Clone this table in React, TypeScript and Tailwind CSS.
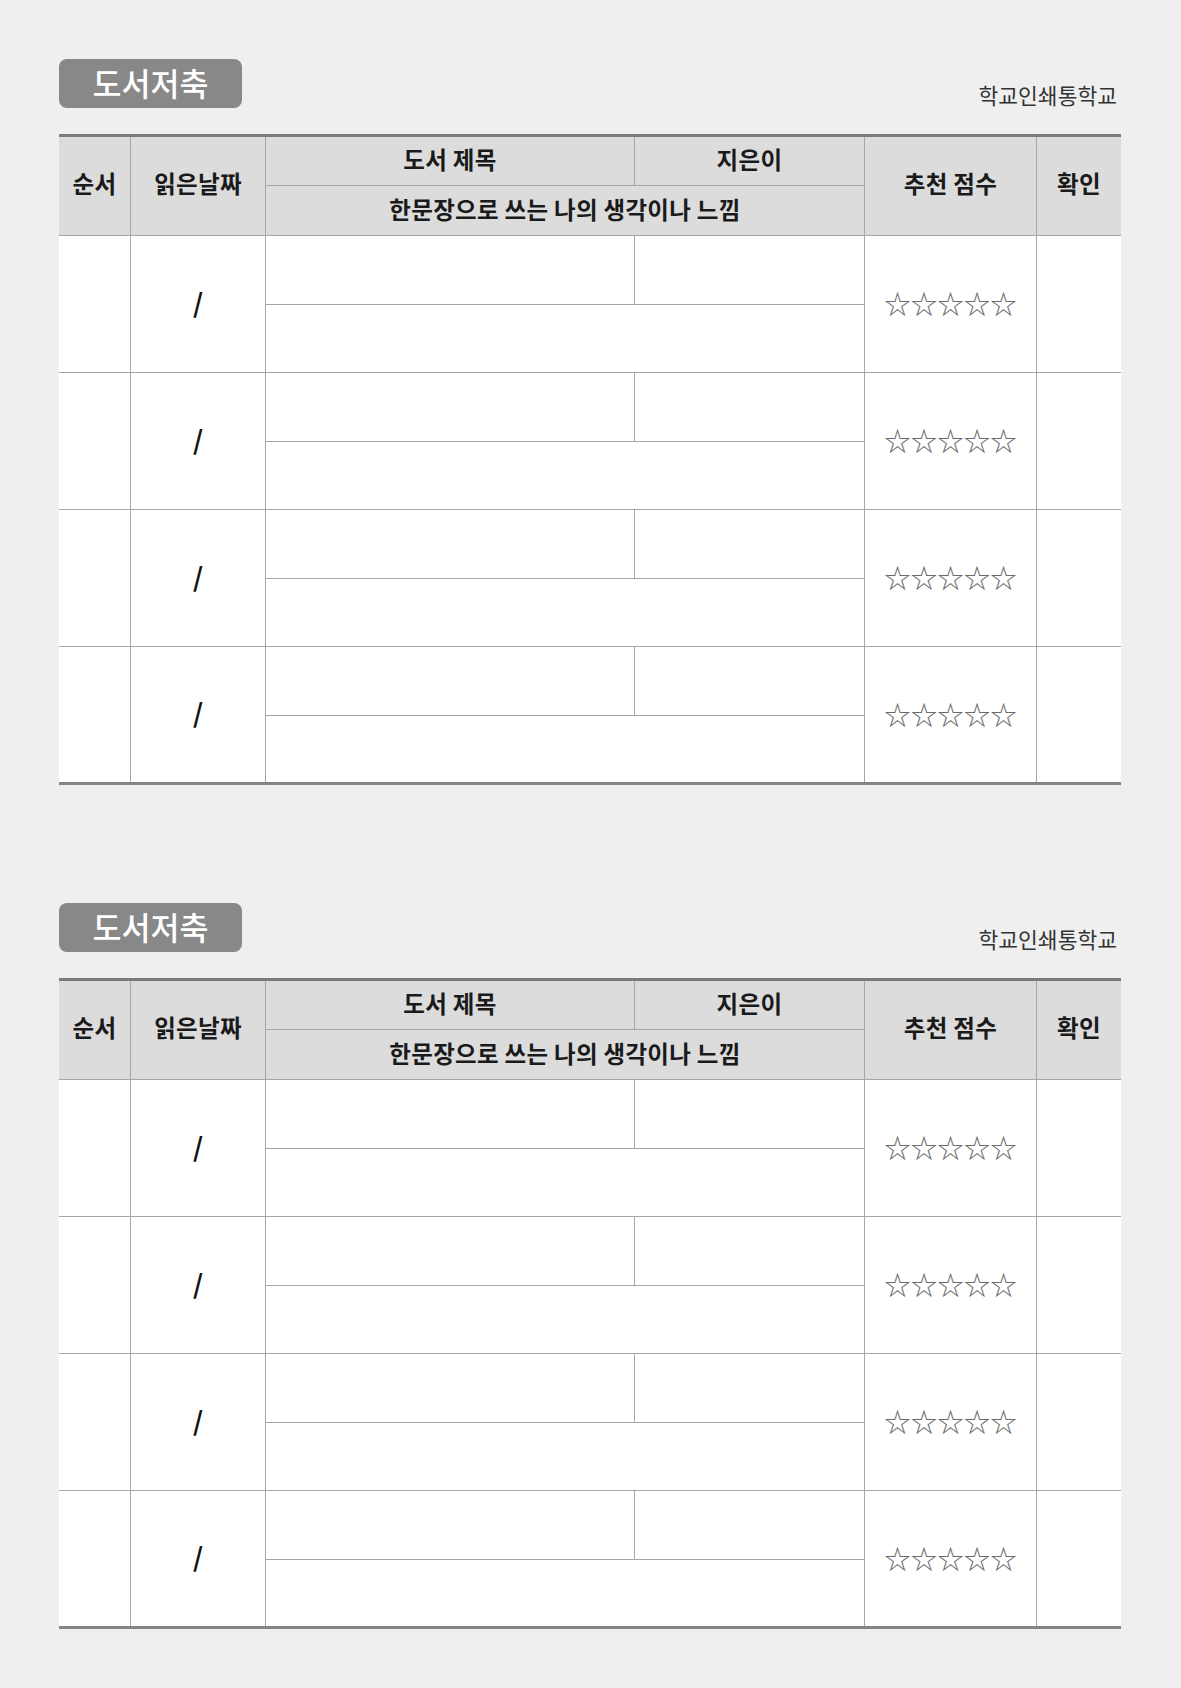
import React from "react";

const KR = { fontFamily: '"Noto Sans CJK KR", "Noto Sans", sans-serif' } as const;

function HeaderRow() {
  return (
    <div className="flex h-[99px] border-b border-[#a6a6a6] bg-[#dcdcdc] text-[23.5px] font-bold tracking-[0.3px] text-[#1a1a1a]">
      <div className="flex w-[72px] items-center justify-center border-r border-[#a6a6a6] pb-[5px]">순서</div>
      <div className="flex w-[135px] items-center justify-center border-r border-[#a6a6a6] pb-[5px]">읽은날짜</div>
      <div className="flex w-[599px] flex-col border-r border-[#a6a6a6]">
        <div className="flex h-[49px] border-b border-[#a6a6a6]">
          <div className="flex w-[369px] items-center justify-center border-r border-[#a6a6a6] pb-[3px]">도서 제목</div>
          <div className="flex flex-1 items-center justify-center pb-[3px]">지은이</div>
        </div>
        <div className="flex flex-1 items-center justify-center pb-[2px]">한문장으로 쓰는 나의 생각이나 느낌</div>
      </div>
      <div className="flex w-[172px] items-center justify-center border-r border-[#a6a6a6] pb-[5px]">추천 점수</div>
      <div className="flex w-[84px] items-center justify-center pb-[5px]">확인</div>
    </div>
  );
}

function DataRow({ last }: { last: boolean }) {
  return (
    <div
      className={
        last
          ? "flex h-[138px] border-b-[3px] border-[#858585] bg-white"
          : "flex h-[137px] border-b border-[#a6a6a6] bg-white"
      }
    >
      <div className="w-[72px] border-r border-[#a6a6a6]" />
      <div className="flex w-[135px] items-center justify-center border-r border-[#a6a6a6] pb-[6px] text-[26px] font-bold text-[#111]">
        /
      </div>
      <div className="flex w-[599px] flex-col border-r border-[#a6a6a6]">
        <div className="flex h-[69px] border-b border-[#a6a6a6]">
          <div className="w-[369px] border-r border-[#a6a6a6]" />
          <div className="flex-1" />
        </div>
        <div className="flex-1" />
      </div>
      <div className="flex w-[172px] items-center justify-center border-r border-[#a6a6a6] pb-[1px] text-[26.5px] leading-none text-[#6a6a6a]">
        ☆☆☆☆☆
      </div>
      <div className="w-[84px]" />
    </div>
  );
}

function Section() {
  return (
    <div className="h-[844px] pl-[59px] pr-[60px] pt-[59px]">
      <div className="flex items-end justify-between">
        <div className="flex h-[49px] w-[183px] items-center justify-center rounded-[8px] bg-[#888888] pb-[2px] text-[31.5px] font-medium text-white">
          도서저축
        </div>
        <div className="mb-[1px] pr-[4px] text-[21.5px] leading-[24px] text-[#333]">학교인쇄통학교</div>
      </div>
      <div className="mt-[26px] border-t-[3px] border-[#7b7b7b]">
        <HeaderRow />
        {[0, 1, 2, 3].map((i) => (
          <DataRow key={i} last={i === 3} />
        ))}
      </div>
    </div>
  );
}

export default function App() {
  return (
    <div className="min-h-[1688px] w-[1181px] bg-[#efefef]" style={KR}>
      <Section />
      <Section />
    </div>
  );
}
